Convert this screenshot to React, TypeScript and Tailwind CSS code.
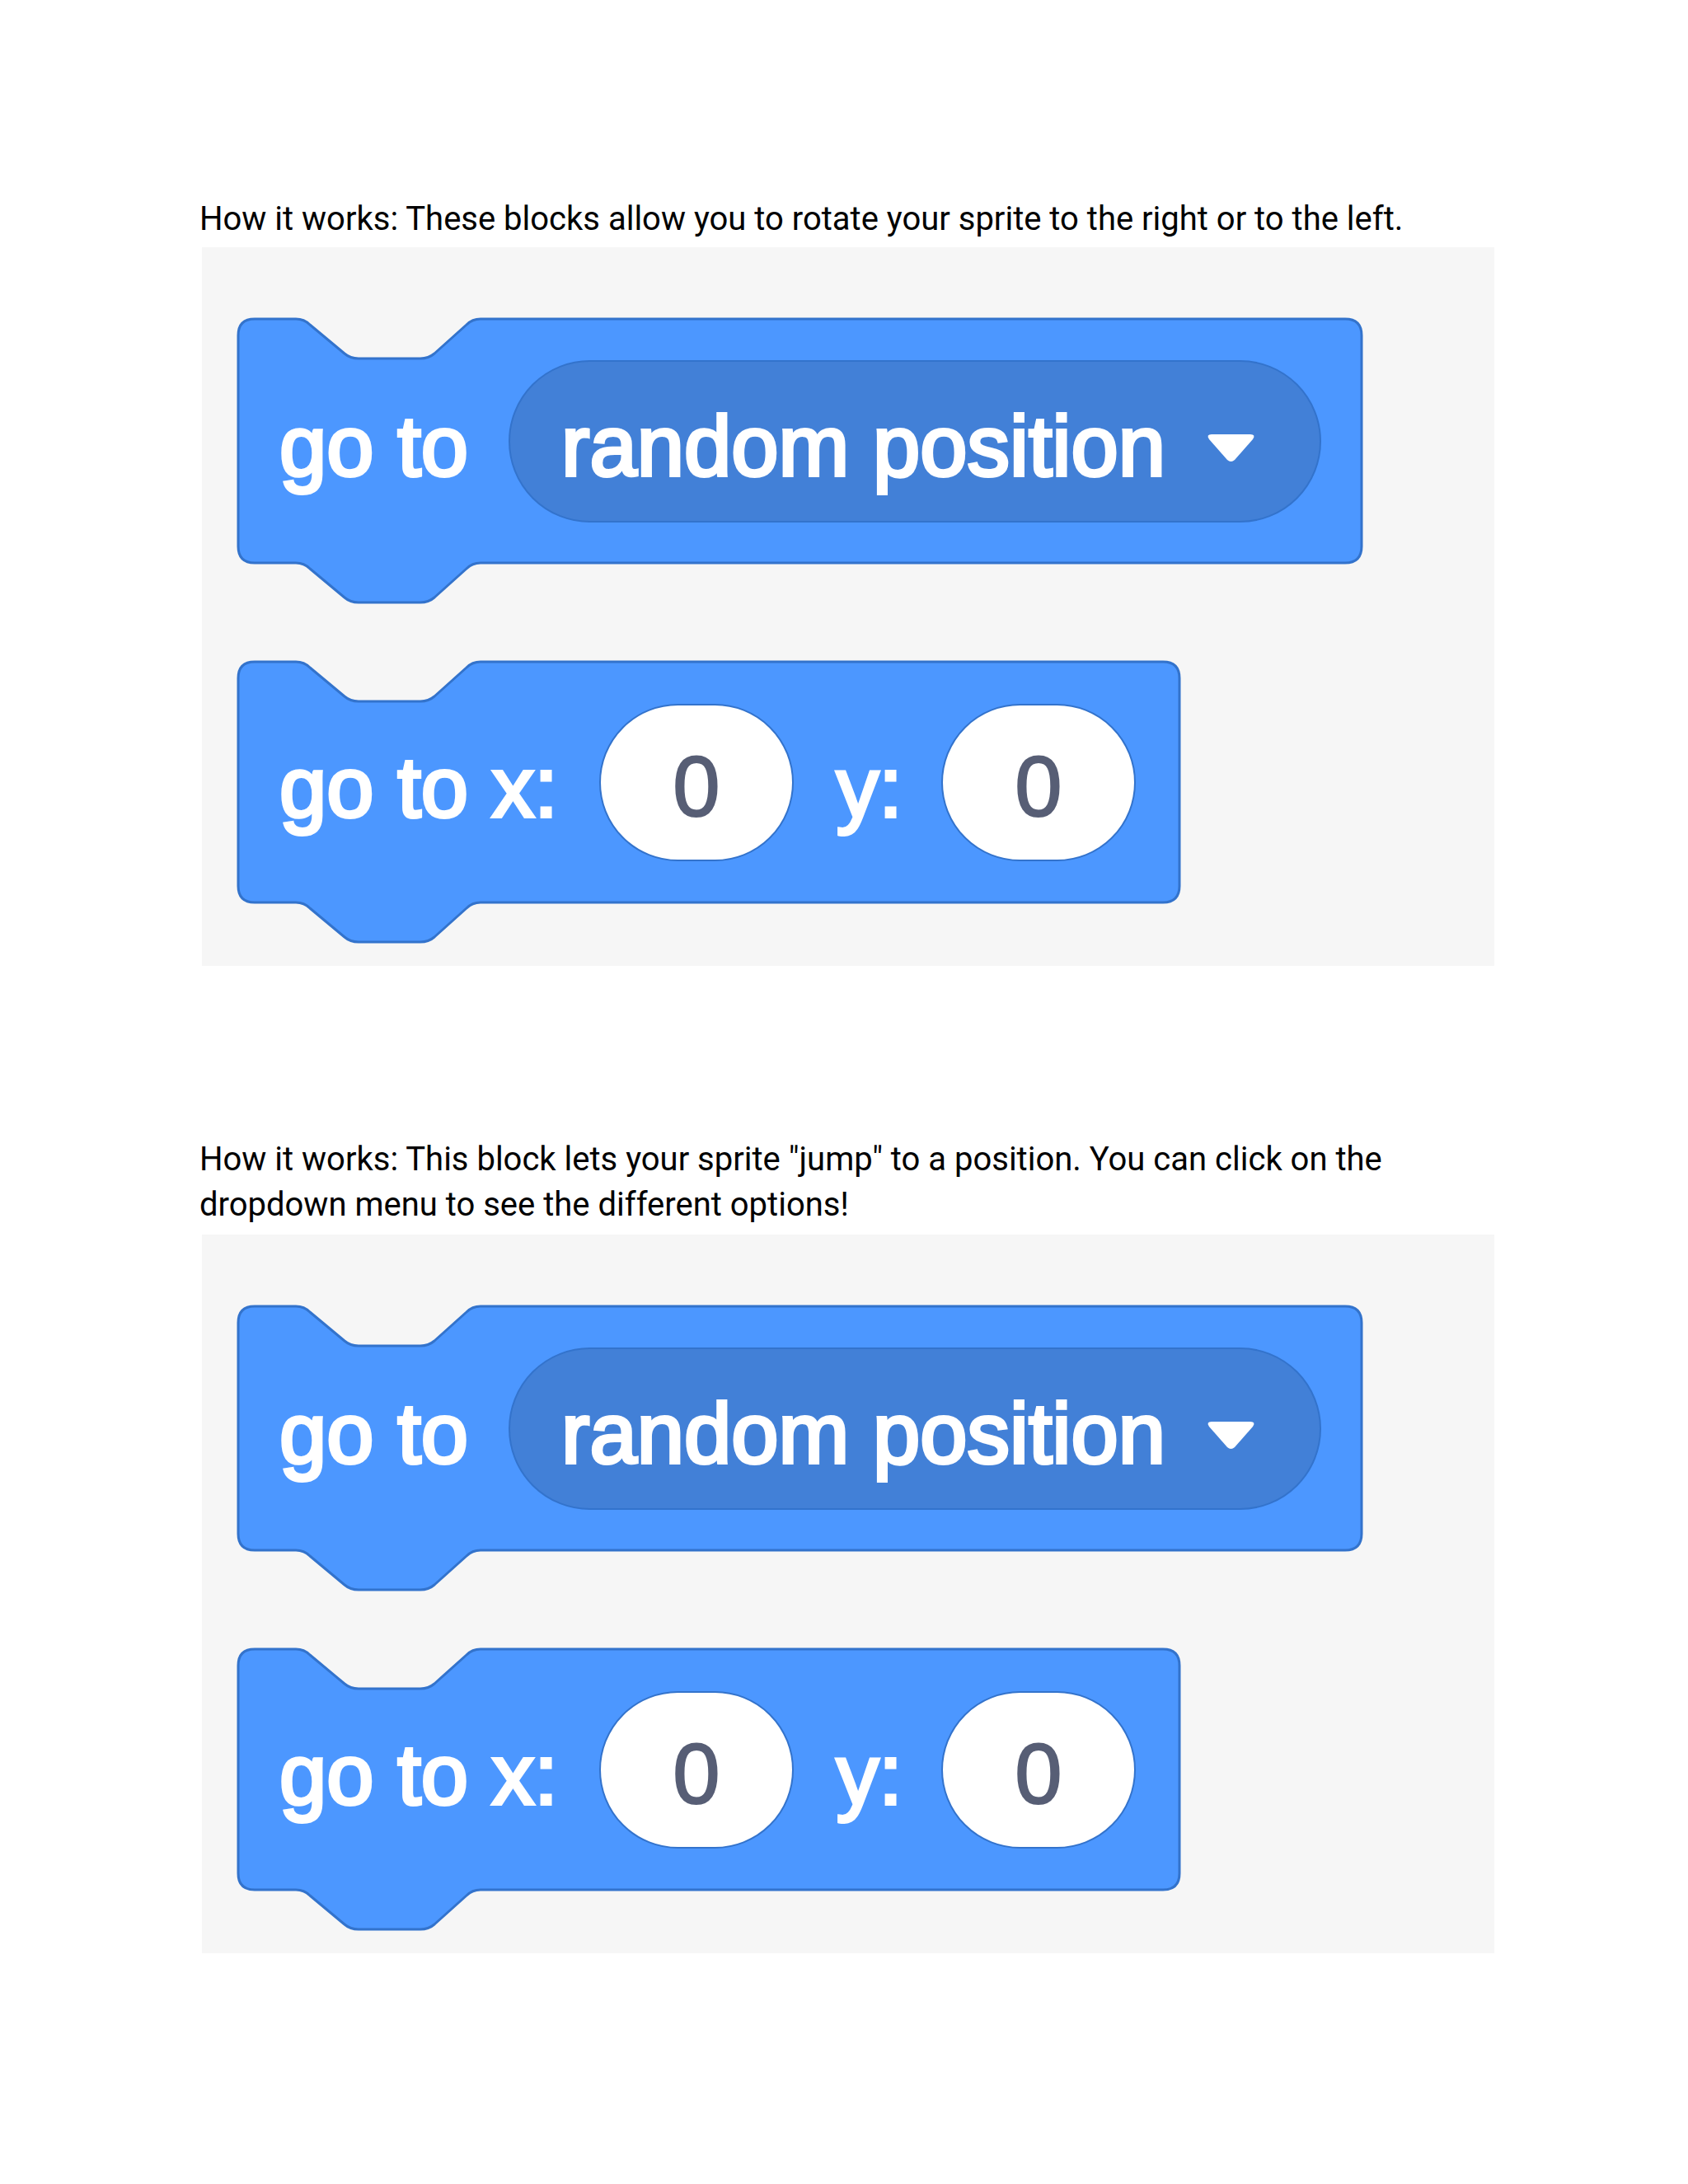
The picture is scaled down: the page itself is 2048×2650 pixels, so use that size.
import React from "react";

const BLUE = "#4c97ff";
const EDGE = "#3373cc";

// block outline with the top notch and bottom tab, drawn at pixel size
function BlockShape({ w, h }: { w: number; h: number }) {
  const r = 20;
  const d = [
    `M 0 ${r}`,
    `Q 0 0 ${r} 0`,
    `L 70 0`,
    `Q 80 0 87 7`,
    `L 129 42`,
    `Q 136 48 146 48`,
    `L 221 48`,
    `Q 231 48 238 42`,
    `L 277 7`,
    `Q 284 0 294 0`,
    `L ${w - r} 0`,
    `Q ${w} 0 ${w} ${r}`,
    `L ${w} ${h - r}`,
    `Q ${w} ${h} ${w - r} ${h}`,
    `L 294 ${h}`,
    `Q 284 ${h} 277 ${h + 7}`,
    `L 238 ${h + 42}`,
    `Q 231 ${h + 48} 221 ${h + 48}`,
    `L 146 ${h + 48}`,
    `Q 136 ${h + 48} 129 ${h + 42}`,
    `L 87 ${h + 7}`,
    `Q 80 ${h} 70 ${h}`,
    `L ${r} ${h}`,
    `Q 0 ${h} 0 ${h - r}`,
    "Z",
  ].join(" ");
  return (
    <svg
      className="absolute left-0 top-0 overflow-visible"
      width={w}
      height={h + 48}
      viewBox={`0 0 ${w} ${h + 48}`}
    >
      <path d={d} fill={BLUE} stroke={EDGE} strokeWidth={3} strokeLinejoin="round" />
    </svg>
  );
}

function Caret() {
  return (
    <svg width="61" height="36" viewBox="0 0 61 36" className="shrink-0">
      <path
        d="M 7 1 L 54 1 Q 61 1 57 7 L 35 32 Q 30.5 36 26 32 L 4 7 Q 0 1 7 1 Z"
        fill="#ffffff"
      />
    </svg>
  );
}

const label =
  "translate-y-[6px] text-white text-[103px] leading-none [font-family:'Liberation_Sans',Arial,sans-serif] [-webkit-text-stroke:4px_#ffffff] whitespace-nowrap";

function NumberField() {
  return (
    <div className="flex h-[191px] w-[236px] shrink-0 items-center justify-center rounded-full border-2 border-[#3373cc] bg-white">
      <span className="translate-y-[5px] text-[103px] leading-none text-[#575e75] [font-family:'Liberation_Sans',Arial,sans-serif] [-webkit-text-stroke:2px_#575e75]">
        0
      </span>
    </div>
  );
}

function GoToBlock() {
  return (
    <div className="relative flex h-[296px] w-[1363px] items-center pl-[50px]">
      <BlockShape w={1363} h={296} />
      <span className={`relative ${label}`}>go to</span>
      <div className="relative ml-[49px] flex h-[197px] w-[986px] items-center rounded-full border-2 border-[#3373cc] bg-[#4280d7] pl-[62px]">
        <span className={label}>random position</span>
        <div className="ml-[49px] mt-[18px]">
          <Caret />
        </div>
      </div>
    </div>
  );
}

function GoToXYBlock() {
  return (
    <div className="relative flex h-[292px] w-[1142px] items-center pl-[50px]">
      <BlockShape w={1142} h={292} />
      <span className={`relative ${label}`}>go to x:</span>
      <div className="relative ml-[50px]">
        <NumberField />
      </div>
      <span className={`relative ml-[52px] ${label}`}>y:</span>
      <div className="relative ml-[47px]">
        <NumberField />
      </div>
    </div>
  );
}

function Screenshot() {
  return (
    <div className="ml-[3px] h-[872px] w-[1568px] bg-[#f6f6f6] pl-[44px] pt-[87px]">
      <GoToBlock />
      <div className="mt-[120px]">
        <GoToXYBlock />
      </div>
    </div>
  );
}

export default function App() {
  return (
    <div className="min-h-[2650px] w-[2048px] bg-white pl-[242px] pt-[238px] text-black [font-family:Roboto,'Liberation_Sans',sans-serif]">
      <p className="text-[40px] leading-[55px]">
        How it works: These blocks allow you to rotate your sprite to the right or to the left.
      </p>
      <div className="mt-[7px]">
        <Screenshot />
      </div>
      <p className="mt-[207px] text-[40px] leading-[55px]">
        How it works: This block lets your sprite "jump" to a position. You can click on the
        <br />
        dropdown menu to see the different options!
      </p>
      <div className="mt-[9px]">
        <Screenshot />
      </div>
    </div>
  );
}
